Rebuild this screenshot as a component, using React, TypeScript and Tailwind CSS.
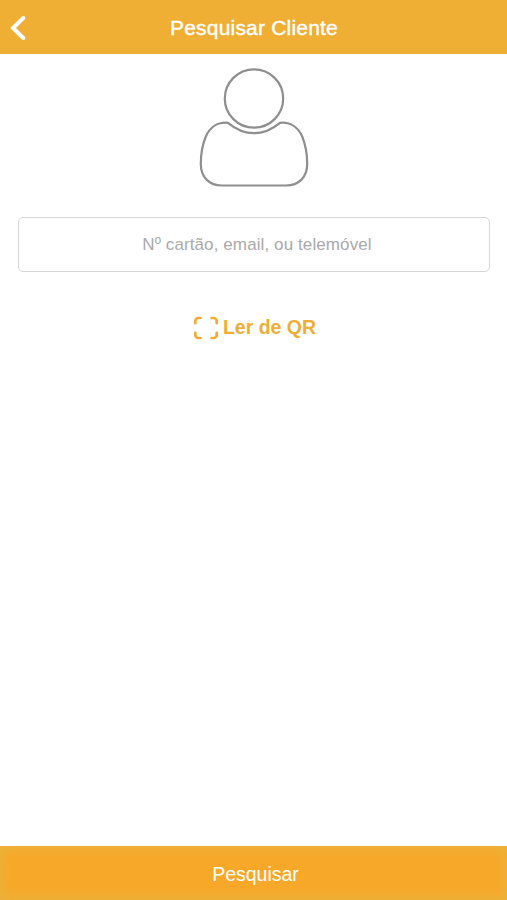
import { useState } from 'react'

function UserOutline() {
  return (
    <svg width="130" height="135" viewBox="0 0 130 135" fill="none" stroke="#8e8e8e" strokeWidth="2.2" strokeLinejoin="round">
      <circle cx="64" cy="38.5" r="29.2" />
      <path d="M38 62.800C46 69.400 54 73.200 64 73.200S82 69.400 90 62.800C101 61.800 108.500 68 112.200 76.500C115.700 85 117.200 95 117.200 104C117.200 117 109 125.500 96 125.500H32C19 125.500 10.800 117 10.800 104C10.800 95 12.300 85 15.800 76.500C19.500 68 27 61.800 38 62.800Z" />
    </svg>
  )
}

function ScanIcon() {
  return (
    <svg width="26" height="24" viewBox="0 0 26 24" fill="none" stroke="#eeae35" strokeWidth="2.7" strokeLinecap="round">
      <path d="M2.300 7.200V5A3 3 0 0 1 5.300 2H7.500" />
      <path d="M18.500 2h2.200a3 3 0 0 1 3 3v2.200" />
      <path d="M23.700 16.800V19a3 3 0 0 1-3 3h-2.200" />
      <path d="M7.500 22H5.300a3 3 0 0 1-3-3v-2.200" />
    </svg>
  )
}

export default function App() {
  const [query, setQuery] = useState('')

  return (
    <div className="flex h-screen w-full flex-col bg-white font-['Liberation_Sans',Arial,sans-serif]">
      <header className="grid h-[54px] shrink-0 grid-cols-[40px_1fr_40px] items-center bg-[#efaf35] pt-0.5 text-white">
        <button type="button" aria-label="Voltar" className="pl-2">
          <svg width="20" height="28" viewBox="0 0 20 28" fill="none" stroke="currentColor" strokeWidth="4" strokeLinecap="round">
            <path d="M15.300 4L5 14l10.300 10" />
          </svg>
        </button>
        <h1 className="pl-px text-center text-[21px] leading-6 tracking-[0.2px] whitespace-nowrap [-webkit-text-stroke:0.4px_white]">
          Pesquisar Cliente
        </h1>
      </header>

      <main className="flex flex-1 flex-col items-center pt-1.5 pr-[17px] pl-[18px]">
        <div className="pl-px">
          <UserOutline />
        </div>
        <input
          value={query}
          onChange={e => setQuery(e.target.value)}
          placeholder="Nº cartão, email, ou telemóvel"
          className="mt-[22px] h-[55px] w-full rounded-[5px] border-[1.5px] border-[#d5d5d5] pl-1.5 text-center text-[17px] tracking-[0.1px] text-[#888888] outline-none placeholder:text-[#a9a9a9]"
        />
        <button type="button" className="mt-[43px] flex items-center gap-1 pl-px text-[#eeae35]">
          <ScanIcon />
          <span className="pb-px text-[19.5px] leading-6 font-bold">Ler de QR</span>
        </button>
      </main>

      <button
        type="button"
        className="h-[54px] w-full shrink-0 bg-[#f7a829] pt-[3px] pl-1 text-[19.5px] text-white shadow-[inset_0_0_9px_5px_#edb038]"
      >
        Pesquisar
      </button>
    </div>
  )
}
